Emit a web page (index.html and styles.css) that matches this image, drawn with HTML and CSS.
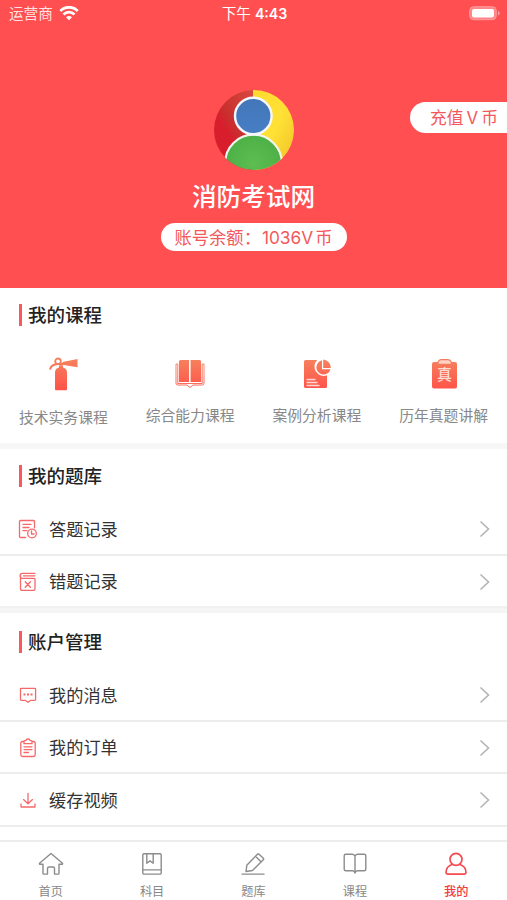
FILE: index.html
```
<!DOCTYPE html>
<html lang="zh-CN">
<head>
<meta charset="utf-8">
<title>我的</title>
<link rel="stylesheet" href="styles.css">
</head>
<body>
<div class="app">
  <header class="hero">
    <div class="status">
      <div class="carrier"><span>运营商</span>
        <svg width="20" height="15" viewBox="0 0 20 15" fill="none" stroke="#fff" stroke-width="2.8"><path d="M1.300 4.900C6.200 0 13.800 0 18.700 4.900M4.500 8.500c3.200-3.100 7.800-3.100 11 0"/><path d="M10 14.200 7 11.200c1.800-1.600 4.200-1.600 6 0z" fill="#fff" stroke="none"/></svg>
      </div>
      <div class="time">下午 <b>4:43</b></div>
      <svg class="battery" width="31" height="15" viewBox="0 0 31 15"><rect x=".7" y=".7" width="26.6" height="13" rx="4" fill="#ff8587" stroke="#ff9c9e"/><rect x="3" y="3" width="22" height="8.5" rx="2" fill="#fff"/><path d="M29 5v4.400q1.600-.6 1.600-2.200T29 5z" fill="#ffa5a6"/></svg>
    </div>
    <svg class="avatar" width="80" height="80" viewBox="0 0 80 80">
      <defs>
        <clipPath id="disc"><circle cx="40" cy="40" r="40"/></clipPath>
        <linearGradient id="red" x1="1" y1="0" x2="0.2" y2="1"><stop offset="0" stop-color="#d9483e"/><stop offset=".5" stop-color="#c9302f"/><stop offset=".65" stop-color="#d81e2c"/></linearGradient>
        <linearGradient id="yellow" x2="1" y2="1"><stop stop-color="#ffd92e"/><stop offset=".5" stop-color="#ffe135"/><stop offset="1" stop-color="#efc026"/></linearGradient>
        <radialGradient id="green"><stop stop-color="#5dbd50"/><stop offset="1" stop-color="#4db147"/></radialGradient>
        <linearGradient id="blue" x2="0" y2="1"><stop stop-color="#4276b8"/><stop offset="1" stop-color="#477ec5"/></linearGradient>
      </defs>
      <g clip-path="url(#disc)"><path d="M0 0h39v80H0z" fill="url(#red)"/><path d="M39 0H80v80H39z" fill="url(#yellow)"/><circle cx="39.500" cy="73" r="28.300" fill="url(#green)" stroke="#f4f4ee" stroke-width="2.200"/><circle cx="39.300" cy="26" r="18.300" fill="url(#blue)" stroke="#f4f7fb" stroke-width="2.400"/></g>
    </svg>
    <h1 class="name">消防考试网</h1>
    <div class="balance"><span>账号余额：</span><span class="amount">1036V</span><span>币</span></div>
    <div class="recharge">充值<span>V</span>币</div>
  </header>

  <section class="courses">
    <h2>我的课程</h2>
    <svg class="defs" width="0" height="0"><defs><linearGradient id="warm" x1="0" y1="0" x2="0" y2="34" gradientUnits="userSpaceOnUse"><stop stop-color="#f58560"/><stop offset="1" stop-color="#ff5047"/></linearGradient></defs></svg>
    <div class="grid">
      <div class="course first">
        <svg width="32" height="34" viewBox="0 0 32 34" fill="url(#warm)"><path d="M8 32.200V15.500q0-4 4-5V8.300h4v2.200q4 1 4 5v16.700q0 1-1 1H9q-1 0-1-1z"/><path d="M15.500 5 30.500 2v8.200L15.500 7.800z"/><path d="M3 12.500Q4 7.500 11 7h6" fill="none" stroke="url(#warm)" stroke-width="2"/><circle cx="11" cy="4.300" r="2.800" fill="none" stroke="url(#warm)" stroke-width="1.800"/></svg>
        <span>技术实务课程</span>
      </div>
      <div class="course">
        <svg width="32" height="34" viewBox="0 0 32 34" fill="url(#warm)"><path d="M5 4.500q0-1.500 1.500-1.500H15v22H5zM16.600 3h9q1.500 0 1.500 1.500V25H16.600z"/><path d="M3.800 7H2v19q0 2 1.500 2H13l3 2.500 3-2.500h9.500q1.500 0 1.500-2V7h-1.800M3.800 7v19.500H16h12.200V7" fill="none" stroke="url(#warm)" stroke-width=".9"/></svg>
        <span>综合能力课程</span>
      </div>
      <div class="course">
        <svg width="32" height="34" viewBox="0 0 32 34" fill="url(#warm)"><path d="M4.500 3h11.700a9.300 9.300 0 0 0 9.800 15.300v11.200q0 1.500-1.500 1.500h-20Q3 31 3 29.500v-25Q3 3 4.500 3z"/><path d="M21 3.300a7.200 7.200 0 1 0 8.500 9H21z"/><path d="M22.200 2.500v8.600h7.600Q29.800 4 22.200 2.500z"/><path d="M5.500 22.500h9M5.500 25.500h11M5.500 28.400h13" stroke="#ffd6cf" stroke-width="1.500"/></svg>
        <span>案例分析课程</span>
      </div>
      <div class="course">
        <svg width="32" height="34" viewBox="0 0 32 34"><rect x="4" y="5" width="25" height="26.500" rx="2" fill="url(#warm)"/><path d="M10 5q1-2.300 3-2.300h7Q22.300 2.700 23.300 5v1.500q0 .8-1 .8H11q-1 0-1-.8z" fill="#ffd2c3" stroke="#f47b5c" stroke-width="1.200"/><text class="exam" x="16.500" y="23" text-anchor="middle">真</text></svg>
        <span>历年真题讲解</span>
      </div>
    </div>
  </section>

  <section class="bank">
    <h2>我的题库</h2>
    <div class="row"><svg class="ico" viewBox="0 0 20 20"><path d="M7.500 18.500H2.500q-1 0-1-1V2.500q0-1 1-1h13q1 0 1 1v6.300M5 5.300h8M5 8.500h6M5 11.700h4"/><circle cx="14" cy="14.500" r="4.300"/><path d="M13.500 12v3H16"/></svg><span>答题记录</span><svg class="arrow" viewBox="0 0 11 18"><path d="m1.500 1.500 8 7.500-8 7.500"/></svg></div>
    <div class="row"><svg class="ico" viewBox="0 0 20 20"><path d="M17 1.300H4.600a2.500 2.500 0 0 0 0 5H16q1 0 1 1V17q0 1.300-1.300 1.300H4q-1.500 0-1.500-1.500V4M5.500 3.800H17M7.200 9.800l5.200 5.400m0-5.400-5.200 5.400"/></svg><span>错题记录</span><svg class="arrow" viewBox="0 0 11 18"><path d="m1.500 1.500 8 7.500-8 7.500"/></svg></div>
  </section>

  <section class="account">
    <h2>账户管理</h2>
    <div class="row"><svg class="ico" viewBox="0 0 20 20"><path d="M3.300 3.300h13.500q.8 0 .8.800v10.400q0 .8-.8.800h-4l-2.800 2-2.800-2H3.300q-.8 0-.8-.8V4.100q0-.8.800-.8z"/><path class="dots" d="M5.500 8.500h2v2h-2zm3.500 0h2v2H9zm3.500 0h2v2h-2z"/></svg><span>我的消息</span><svg class="arrow" viewBox="0 0 11 18"><path d="m1.500 1.500 8 7.500-8 7.500"/></svg></div>
    <div class="row"><svg class="ico" viewBox="0 0 20 20"><path d="M6 3.500H4.500q-1.700 0-1.700 1.700v11.600q0 1.700 1.700 1.700h11q1.700 0 1.700-1.700V5.200q0-1.700-1.700-1.700H14M6 5.700V3.300q0-.7.800-.7h1q.4-1.600 2.200-1.600t2.200 1.600h1q.8 0 .8.700v2.400zM6 8.800h8M6 11.600h8M6 14.500h4.500"/></svg><span>我的订单</span><svg class="arrow" viewBox="0 0 11 18"><path d="m1.500 1.500 8 7.500-8 7.500"/></svg></div>
    <div class="row"><svg class="ico" viewBox="0 0 20 20"><path d="M10 3.500v10.200M5.500 9.600l4.500 4.200 4.500-4.200M3 14v3h14v-3"/></svg><span>缓存视频</span><svg class="arrow" viewBox="0 0 11 18"><path d="m1.500 1.500 8 7.500-8 7.500"/></svg></div>
  </section>

  <nav class="tabs">
    <div class="tab"><svg viewBox="0 0 26 26"><path d="M13 2.500 1.500 12.300q-.4 1 .8 1H5v9q0 .8.800.8h3.700v-5.600q0-1.500 1.500-1.500h4q1.500 0 1.500 1.500v5.600h3.700q.8 0 .8-.8v-9h2.700q1.200 0 .8-1z"/></svg><span>首页</span></div>
    <div class="tab"><svg viewBox="0 0 26 26"><path d="M5 2.700h16q1.200 0 1.200 1.200v18q0 1.200-1.200 1.200H5q-1.200 0-1.200-1.200v-18q0-1.200 1.200-1.200zM3.800 18.900h18.400M7.800 2.700v9.500l3.200-2.300 3.200 2.300V2.700"/></svg><span>科目</span></div>
    <div class="tab"><svg viewBox="0 0 26 26"><path d="M1.500 23.100h23M6 20.500l.8-6.200L17.500 3.200q.8-.8 1.600 0l4.200 4q.8.800 0 1.600L12.500 19.500zM15.500 5.300l5.700 5.600"/></svg><span>题库</span></div>
    <div class="tab"><svg viewBox="0 0 26 26"><path d="M13 5q-1-1.800-3-1.800H3.700q-1.500 0-1.500 1.500v13.600q0 1.500 1.500 1.500h7q1.500 0 2.300 2.200.8-2.200 2.300-2.200h7q1.500 0 1.500-1.500V4.700q0-1.500-1.500-1.500H16q-2 0-3 1.800zV22"/></svg><span>课程</span></div>
    <div class="tab active"><svg viewBox="0 0 26 26"><circle cx="13" cy="8.300" r="6"/><path d="M9.500 13.300Q3 15.500 3 21.500q0 1.600 1.600 1.600h16.800q1.600 0 1.600-1.600 0-6-6.500-8.200"/></svg><span>我的</span></div>
  </nav>
</div>
</body>
</html>
```
FILE: styles.css
```
* { box-sizing: border-box; }
body { margin: 0; background: #fff; font-family: "Liberation Sans", "Noto Sans CJK SC", sans-serif; }
svg { display: block; flex: none; }
.app { width: 507px; height: 900px; display: flex; flex-direction: column; overflow: hidden; }

.hero { position: relative; flex: none; height: 288px; background: #ff4f51; color: #fff; display: flex; flex-direction: column; align-items: center; }
.status { width: 100%; height: 28px; padding: 0 7px 2px 9px; display: grid; grid-template-columns: 1fr auto 1fr; align-items: center; font-size: 14.6px; line-height: 20px; }
.carrier { display: flex; align-items: center; gap: 6px; color: #ffe2e2; }
.carrier span, .time { padding-top: 2px; }
.time b { font-family: Inter, sans-serif; font-weight: 600; font-size: 14.2px; }
.battery { justify-self: end; }
.avatar { margin-top: 62px; }
.name { margin: 7px 0 0; font-size: 24.6px; line-height: 36px; font-weight: 500; font-family: "Noto Sans CJK SC", sans-serif; }
.balance { margin-top: 10px; width: 186px; height: 28px; border-radius: 14px; background: #fff; color: #f3595b; display: flex; align-items: center; padding: 1px 0 0 14px; font-size: 17.3px; line-height: 24px; white-space: nowrap; }
.amount { font-family: Inter, sans-serif; font-size: 17.3px; margin: 0 2px 0 1px; }
.recharge { position: absolute; right: 0; top: 102px; width: 97px; height: 31px; border-radius: 16px 0 0 16px; background: #fff; color: #f3595b; font-size: 16.8px; line-height: 32px; padding-left: 20px; white-space: nowrap; }
.recharge span { font-family: Inter, sans-serif; margin: 0 3px; }

section { flex: none; background: #fff; }
h2 { margin: 0 0 0 19px; height: 22px; border-left: 3px solid #f8595d; padding-left: 6px; font: 500 18.5px/20px "Noto Sans CJK SC", sans-serif; color: #222; }
.courses { height: 161px; padding-top: 16px; border-bottom: 6px solid #f7f7f7; }
.defs { position: absolute; }
.grid { display: grid; grid-template-columns: repeat(4, 1fr); margin-top: 31px; }
.course { display: flex; flex-direction: column; align-items: center; gap: 14px; font-size: 14.8px; line-height: 22px; color: #888; white-space: nowrap; }
.course.first { gap: 16px; }
.exam { font: 500 15px "Noto Sans CJK SC", sans-serif; fill: #ffdcd5; }

.bank { height: 164px; padding-top: 16px; border-bottom: 7px solid #f5f5f5; }
.account { height: 227px; padding-top: 18px; }
.bank h2, .account h2 { margin-bottom: 16px; }
.row { height: 52.5px; padding: 2px 17px 0 18px; display: flex; align-items: center; border-bottom: 2px solid #ededed; font-size: 17.2px; line-height: 26px; color: #333; }
.bank .row:last-child { border-color: #f1f1f1; }
.row span { flex: 1; padding: 1px 0 0 11px; }
.ico { width: 20px; height: 20px; fill: none; stroke: #f5696b; stroke-width: 1.3; stroke-linejoin: round; stroke-linecap: round; }
.ico .dots { fill: #f5696b; stroke: none; }
.arrow { width: 11px; height: 18px; fill: none; stroke: #b4b4b4; stroke-width: 1.6; }

.tabs { flex: none; height: 61px; border-top: 2px solid #ededed; background: #fff; display: grid; grid-template-columns: repeat(5, 1fr); }
.tab { display: flex; flex-direction: column; align-items: center; padding-top: 8.5px; font-size: 12.2px; line-height: 18px; color: #888; }
.tab svg { width: 26px; height: 26px; fill: none; stroke: #8c8c8c; stroke-width: 1.4; stroke-linejoin: round; margin-bottom: 6.5px; }
.tab.active { color: #f5393f; font-weight: 500; }
.tab.active svg { stroke: #f5494f; stroke-width: 1.7; }
```
